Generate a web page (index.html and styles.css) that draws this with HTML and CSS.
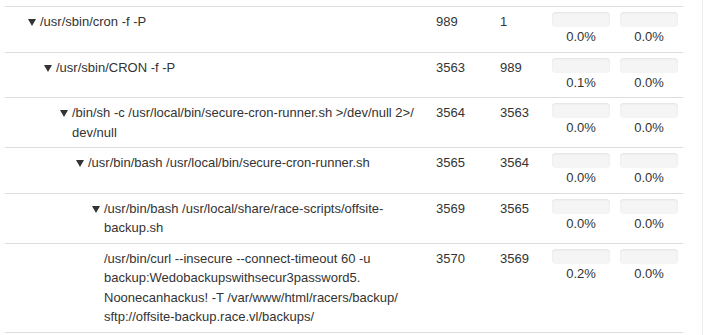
FILE: index.html
```html
<!DOCTYPE html>
<html>
<head>
<meta charset="utf-8">
<link rel="stylesheet" href="styles.css">
</head>
<body>
<div class="panel">
<table class="proc">
<tbody>
<tr>
<td class="cmd"><div class="node lvl1"><span class="caret"></span><span class="txt">/usr/sbin/cron -f -P</span></div></td>
<td class="pid">989</td><td class="ppid">1</td>
<td class="res"><div class="bar"></div><div class="pct">0.0%</div></td>
<td class="res"><div class="bar"></div><div class="pct">0.0%</div></td>
</tr>
<tr>
<td class="cmd"><div class="node lvl2"><span class="caret"></span><span class="txt">/usr/sbin/CRON -f -P</span></div></td>
<td class="pid">3563</td><td class="ppid">989</td>
<td class="res"><div class="bar"></div><div class="pct">0.1%</div></td>
<td class="res"><div class="bar"></div><div class="pct">0.0%</div></td>
</tr>
<tr>
<td class="cmd"><div class="node lvl3"><span class="caret"></span><span class="txt">/bin/sh -c /usr/local/bin/secure-cron-runner.sh &gt;/dev/null 2&gt;/<br>dev/null</span></div></td>
<td class="pid">3564</td><td class="ppid">3563</td>
<td class="res"><div class="bar"></div><div class="pct">0.0%</div></td>
<td class="res"><div class="bar"></div><div class="pct">0.0%</div></td>
</tr>
<tr>
<td class="cmd"><div class="node lvl4"><span class="caret"></span><span class="txt">/usr/bin/bash /usr/local/bin/secure-cron-runner.sh</span></div></td>
<td class="pid">3565</td><td class="ppid">3564</td>
<td class="res"><div class="bar"></div><div class="pct">0.0%</div></td>
<td class="res"><div class="bar"></div><div class="pct">0.0%</div></td>
</tr>
<tr>
<td class="cmd"><div class="node lvl5"><span class="caret"></span><span class="txt">/usr/bin/bash /usr/local/share/race-scripts/offsite-<br>backup.sh</span></div></td>
<td class="pid">3569</td><td class="ppid">3565</td>
<td class="res"><div class="bar"></div><div class="pct">0.0%</div></td>
<td class="res"><div class="bar"></div><div class="pct">0.0%</div></td>
</tr>
<tr>
<td class="cmd"><div class="node lvl5"><span class="caret leaf"></span><span class="txt">/usr/bin/curl --insecure --connect-timeout 60 -u<br>backup:Wedobackupswithsecur3password5.<br>Noonecanhackus! -T /var/www/html/racers/backup/<br>sftp://offsite-backup.race.vl/backups/</span></div></td>
<td class="pid">3570</td><td class="ppid">3569</td>
<td class="res"><div class="bar"></div><div class="pct">0.2%</div></td>
<td class="res"><div class="bar"></div><div class="pct">0.0%</div></td>
</tr>
</tbody>
</table>
</div>
</body>
</html>
```
FILE: styles.css
```css
html, body {
  margin: 0;
  padding: 0;
  background: #fff;
}
body {
  font-family: "Liberation Sans", Arial, sans-serif;
  font-size: 13px;
  line-height: 19.5px;
  color: #333;
  height: 335px;
  overflow: hidden;
}
.panel {
  margin-left: 5px;
  width: 698px;
  height: 335px;
  padding-top: 6px;
  box-sizing: border-box;
  border-right: 1px solid #ececec;
}
.proc {
  width: 678px;
  border-collapse: collapse;
  table-layout: fixed;
}
.proc td {
  padding: 5px;
  vertical-align: top;
  border-top: 1px solid #ddd;
  border-bottom: 1px solid #ddd;
}
.cmd { width: 416px; }
.pid { width: 54px; }
.ppid { width: 42px; }
.res { width: 58px; }
.node {
  display: flex;
  align-items: flex-start;
}
.lvl1 { padding-left: 18px; }
.lvl2 { padding-left: 34px; }
.lvl3 { padding-left: 50px; }
.lvl4 { padding-left: 66px; }
.lvl5 { padding-left: 82px; }
.caret {
  flex: 0 0 12px;
  height: 19.5px;
  display: flex;
  align-items: center;
}
.caret::before {
  content: "";
  display: block;
  margin-top: 2px;
  width: 0;
  height: 0;
  border-left: 4px solid transparent;
  border-right: 4px solid transparent;
  border-top: 7px solid #333;
}
.caret.leaf::before {
  display: none;
}
.txt {
  flex: 1 1 auto;
}
.bar {
  height: 15px;
  background: #f5f5f5;
  border-radius: 4px;
  box-shadow: inset 0 1px 2px rgba(0, 0, 0, 0.08);
}
.pct {
  text-align: center;
}
```
